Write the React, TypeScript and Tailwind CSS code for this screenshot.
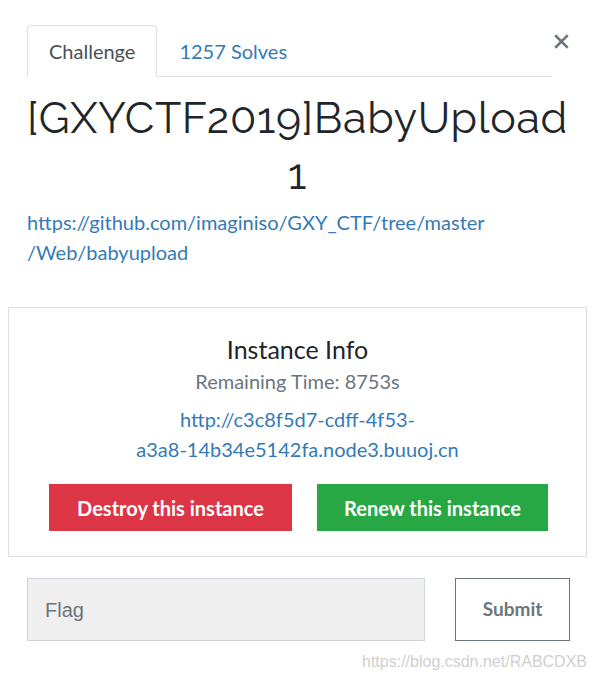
import React from "react";

export default function App() {
  const lato = { fontFamily: "Lato, 'Open Sans', sans-serif" };
  return (
    <div className="w-[595px] h-[681px] bg-white relative overflow-hidden" style={lato}>
      <div className="flex items-start pl-[27px] pt-[25px] pr-[26px]">
        <div className="flex flex-1 border-b border-[#dee2e6]">
          <div className="h-[52px] -mb-px px-[21px] flex items-center border border-[#dee2e6] border-b-white rounded-t-[4px] bg-white text-[#495057] text-[20px]">
            Challenge
          </div>
          <div className="h-[51px] px-[22px] flex items-center text-[#337ab7] text-[20px]">1257 Solves</div>
        </div>
        <button className="w-[15px] mt-[9px] ml-[2px] text-[#6c757d]">
          <svg width="15" height="15" viewBox="0 0 14 14">
            <path d="M2 2 L12 12 M12 2 L2 12" stroke="#6c757d" strokeWidth="2.4" strokeLinecap="square" />
          </svg>
        </button>
      </div>

      <div className="px-[20px]">
        <h1
          className="text-center text-[#212529] text-[43px] leading-[56px] mt-[13px] tracking-[0.7px]"
          style={{ fontFamily: "Raleway, Lato, 'Open Sans', sans-serif", fontWeight: 400 }}
        >
          [GXYCTF2019]BabyUpload
          <br />1
        </h1>
        <div className="mt-[5px] pl-[7px] text-[20px] leading-[30px] text-[#337ab7]">
          https://github.com/imaginiso/GXY_CTF/tree/master
          <br />
          /Web/babyupload
        </div>
      </div>

      <div className="mx-[8px] mt-[40px] border border-[#dee2e6] flex flex-col items-center pt-[26px] pb-[25px]">
        <div className="text-[25px] leading-[30px] text-[#212529]">Instance Info</div>
        <div className="text-[20px] leading-[26px] text-[#6c757d] mt-[4px]">Remaining Time: 8753s</div>
        <div className="text-[20px] leading-[30px] text-[#337ab7] text-center mt-[10px]">
          http://c3c8f5d7-cdff-4f53-
          <br />
          a3a8-14b34e5142fa.node3.buuoj.cn
        </div>
        <div className="flex gap-[25px] mt-[20px] ml-[2px]">
          <button className="w-[243px] h-[47px] bg-[#dc3545] text-white text-[20px] font-bold">
            Destroy this instance
          </button>
          <button className="w-[231px] h-[47px] bg-[#28a745] text-white text-[20px] font-bold">
            Renew this instance
          </button>
        </div>
      </div>

      <div className="flex pl-[27px] mt-[21px] gap-[30px]">
        <div className="w-[398px] h-[63px] bg-[#efefef] border border-[#ced4da] flex items-center pl-[17px] text-[20px] text-[#6c757d]" style={{ fontFamily: "'Liberation Sans', Arial, sans-serif" }}>
          Flag
        </div>
        <button className="w-[115px] h-[63px] border border-[#6c757d] bg-white text-[#6c757d] text-[19px] font-bold">
          Submit
        </button>
      </div>

      <div
        className="absolute right-[8px] top-[650px] text-[16px] text-[#d0d0d0]"
        style={{ fontFamily: "'Liberation Sans', Arial, sans-serif" }}
      >
        https://blog.csdn.net/RABCDXB
      </div>
    </div>
  );
}
